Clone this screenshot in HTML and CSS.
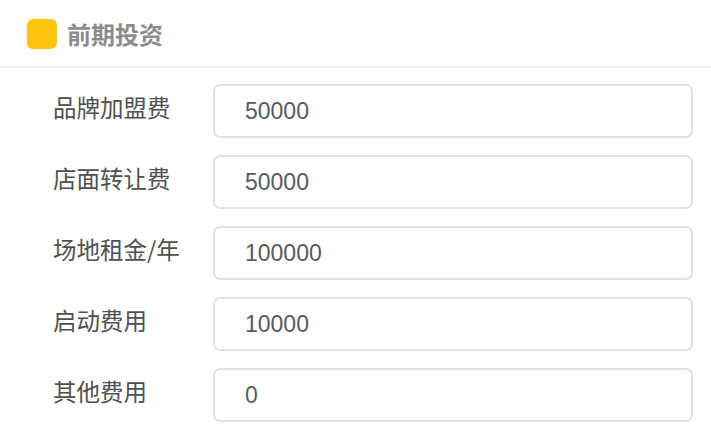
FILE: index.html
```html
<!DOCTYPE html>
<html lang="zh-CN">
<head>
<meta charset="utf-8">
<link rel="stylesheet" href="styles.css">
</head>
<body>
<div class="header">
  <span class="mark"></span>
  <span class="title">前期投资</span>
</div>
<div class="form">
  <div class="row"><label class="label">品牌加盟费</label><div class="input">50000</div></div>
  <div class="row"><label class="label">店面转让费</label><div class="input">50000</div></div>
  <div class="row"><label class="label">场地租金/年</label><div class="input">100000</div></div>
  <div class="row"><label class="label">启动费用</label><div class="input">10000</div></div>
  <div class="row"><label class="label">其他费用</label><div class="input">0</div></div>
</div>
</body>
</html>
```
FILE: styles.css
```css
html, body {
  margin: 0;
  padding: 0;
  background: #ffffff;
}
body {
  font-family: "Liberation Sans", "Noto Sans CJK SC", sans-serif;
  width: 711px;
  height: 445px;
  overflow: hidden;
}
.header {
  display: flex;
  align-items: center;
  padding-left: 27px;
  gap: 10px;
  border-bottom: 2px solid #efeff4;
  box-sizing: border-box;
  height: 68px;
}
.mark {
  width: 30px;
  height: 30px;
  border-radius: 6px;
  background: #ffc40f;
  margin-top: 1px;
}
.title {
  font-family: "Noto Sans CJK SC", sans-serif;
  font-size: 24px;
  font-weight: bold;
  color: #8c8c8c;
}
.form {
  padding-top: 16px;
  display: flex;
  flex-direction: column;
  gap: 17px;
}
.row {
  display: flex;
  align-items: center;
  height: 54px;
}
.label {
  width: 160px;
  padding-left: 53px;
  font-family: "Noto Sans CJK SC", sans-serif;
  font-size: 23.5px;
  color: #505050;
  margin-top: -8px;
}
.input {
  width: 480px;
  height: 54px;
  box-sizing: border-box;
  border: 2px solid #e2e2e5;
  border-radius: 7px;
  padding-left: 30px;
  display: flex;
  align-items: center;
  font-size: 23px;
  color: #5a5a5a;
}
```
